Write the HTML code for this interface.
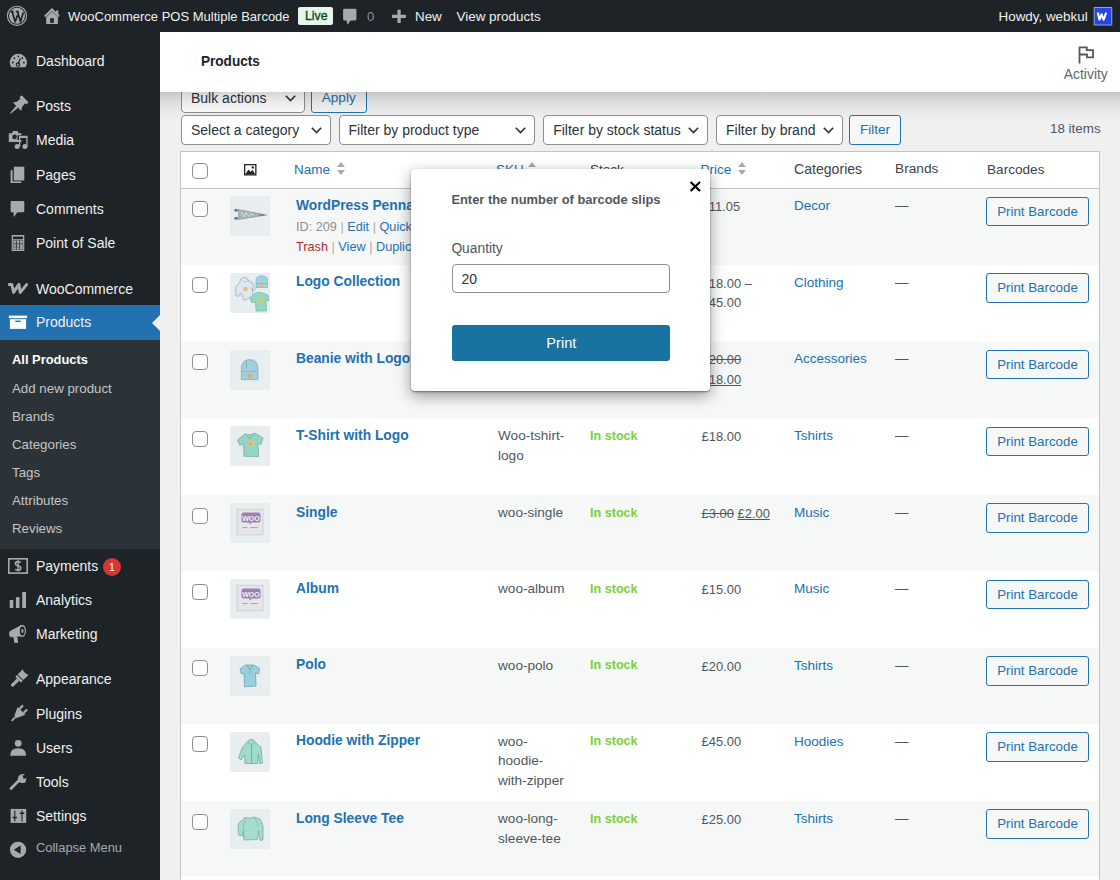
<!DOCTYPE html>
<html><head><meta charset="utf-8"><title>Products</title>
<style>
html,body{margin:0;padding:0;}
body{width:1120px;height:880px;overflow:hidden;background:#f0f0f1;font-family:"Liberation Sans",sans-serif;}
#wrap{position:relative;width:1120px;height:880px;overflow:hidden;}
.t{position:absolute;line-height:1;white-space:nowrap;}
.t a{color:inherit;text-decoration:none}
.t .sep{color:#a7aaad}
#content{position:absolute;left:0;top:0;width:1120px;height:880px;}
#header{position:absolute;left:0;top:0;width:0;height:0}
.hdrbg{position:absolute;left:160px;top:32px;width:960px;height:60px;background:#fff;}
.hdrsh{position:absolute;left:160px;top:92px;width:960px;height:28px;background:linear-gradient(rgba(0,0,0,.17),rgba(0,0,0,.13) 15%,rgba(0,0,0,.075) 40%,rgba(0,0,0,.03) 70%,rgba(0,0,0,0));}
#sidebar{position:absolute;left:0;top:0;width:0;height:0}
.sbbg{position:absolute;left:0;top:32px;width:160px;height:848px;background:#1d2327;}
#adminbar{position:absolute;left:0;top:0;width:1120px;height:32px;background:#1d2327;}
#header > .t, #sidebar > .t, #modalc > .t {margin-top:0}
.cb{position:absolute;width:14px;height:14px;border:1px solid #8c8f94;border-radius:4px;background:#fff;}
.thumb{position:absolute;width:40px;height:40px;background:#e8eef0;overflow:hidden;border-radius:2px}
.btn{position:absolute;box-sizing:border-box;border:1px solid #2271b1;border-radius:3px;background:#f6f7f7;color:#2271b1;font-size:13.5px;}
.pb{width:103px;height:29.5px;line-height:28px;text-align:center;font-size:13.3px}
.sel{position:absolute;box-sizing:border-box;height:30px;border:1px solid #8c8f94;border-radius:4px;background:#fff;color:#2c3338;font-size:14px;line-height:28px;padding-left:9px;white-space:nowrap}
.chev{position:absolute;right:8px;top:11px;width:11px;height:7px}
.sort{position:absolute;width:8px;height:14px}
.sort:before{content:"";position:absolute;left:0;top:0;border-left:4px solid transparent;border-right:4px solid transparent;border-bottom:5px solid #a7aaad}
.sort:after{content:"";position:absolute;left:0;top:8px;border-left:4px solid transparent;border-right:4px solid transparent;border-top:5px solid #a7aaad}
.sortup{position:absolute;width:8px;height:14px}
.sortup:before{content:"";position:absolute;left:0;top:0;border-left:4px solid transparent;border-right:4px solid transparent;border-bottom:5px solid #a7aaad}
#modal{position:absolute;left:410.5px;top:168.5px;width:299px;height:222.8px;background:#fff;border-radius:4px;box-shadow:0 1px 2px rgba(0,0,0,0.45),0 5px 15px rgba(0,0,0,0.38);}
#modalc{position:absolute;left:0;top:0;width:0;height:0}

</style></head>
<body>
<div id="wrap">
<div id="content">
<div style="position:absolute;left:180px;top:151px;width:918px;height:800px;background:#fff;border:1px solid #c3c4c7;"></div>
<div style="position:absolute;left:181px;top:188px;width:918px;height:1px;background:#c3c4c7"></div>
<div style="position:absolute;left:181px;top:189.00px;width:918px;height:75.80px;background:#f6f7f7"></div>
<div style="position:absolute;left:181px;top:264.80px;width:918px;height:76.70px;background:#fff"></div>
<div style="position:absolute;left:181px;top:341.50px;width:918px;height:76.70px;background:#f6f7f7"></div>
<div style="position:absolute;left:181px;top:418.20px;width:918px;height:76.80px;background:#fff"></div>
<div style="position:absolute;left:181px;top:495.00px;width:918px;height:76.20px;background:#f6f7f7"></div>
<div style="position:absolute;left:181px;top:571.20px;width:918px;height:76.60px;background:#fff"></div>
<div style="position:absolute;left:181px;top:647.80px;width:918px;height:75.95px;background:#f6f7f7"></div>
<div style="position:absolute;left:181px;top:723.75px;width:918px;height:77.35px;background:#fff"></div>
<div style="position:absolute;left:181px;top:801.10px;width:918px;height:75.30px;background:#f6f7f7"></div>
<div style="position:absolute;left:181px;top:876.40px;width:918px;height:76.60px;background:#fff"></div>
<div class="cb" style="left:192px;top:200.80px"></div>
<div class="thumb" style="left:230px;top:196.30px"><svg width="40" height="40" viewBox="0 0 40 40" style="position:absolute;left:0;top:0"><path d="M8.5 13.5 L36.5 19 L8.5 23.5 Z" fill="#a4b4b9" stroke="#7f9196" stroke-width="0.6"/><path d="M11 16 L14 21 L16 16.5 L19 20.5 L21 17.5 L24 19.5" fill="none" stroke="#d3dde0" stroke-width="1"/><rect x="4.5" y="13" width="3.2" height="2.6" fill="#6b7478"/><rect x="4.5" y="21" width="3.2" height="2.6" fill="#6b7478"/><path d="M29 19 L34 19" stroke="#5b676b" stroke-width="1.2"/></svg></div>
<div class="t" style="left:296.00px;top:198.97px;font-size:13.8px;color:#2271b1;font-weight:bold;">WordPress Pennant</div>
<div class="t" style="left:296.00px;top:220.71px;font-size:12.7px;color:#2271b1;font-weight:normal;"><span style="color:#8c8f94">ID: 209</span> <span class="sep">|</span> <a>Edit</a> <span class="sep">|</span> <a>Quick Edit</a></div>
<div class="t" style="left:296.00px;top:241.01px;font-size:12.7px;color:#2271b1;font-weight:normal;"><span style="color:#b32d2e">Trash</span> <span class="sep">|</span> <a>View</a> <span class="sep">|</span> <a>Duplicate</a></div>
<div class="t" style="left:701.50px;top:199.69px;font-size:12.95px;color:#50575e;font-weight:normal;line-height:19.5px;top:197.00px">£11.05</div>
<div class="t" style="left:794.00px;top:199.23px;font-size:13.5px;color:#2271b1;font-weight:normal;">Decor</div>
<div class="t" style="left:895.00px;top:199.23px;font-size:13.5px;color:#50575e;font-weight:normal;">—</div>
<div class="btn pb" style="left:986px;top:196.60px">Print Barcode</div>
<div class="cb" style="left:192px;top:277.30px"></div>
<div class="thumb" style="left:230px;top:272.80px"><svg width="40" height="40" viewBox="0 0 40 40" style="position:absolute;left:0;top:0"><path d="M13 5.5 Q16 3 19 5.5 L20 8.5 L23.5 11 L25 19 L22.5 19.5 L22 16 L21.5 25 L12 27 L10 19 L7 22 L4.5 20.5 L6.5 12 L11 8.5 Z" fill="#dfe7ee" stroke="#a3b3c1" stroke-width="0.8" transform="rotate(-12 15 16)"/><path d="M12.5 7.5 Q15.5 10.5 19 7.5" fill="none" stroke="#a3b3c1" stroke-width="0.6"/><circle cx="15.5" cy="16" r="2.3" fill="#e2bf73"/><path d="M26 14.5 L26 7.5 Q26 2.8 31.5 2.8 Q37.5 2.8 37.5 7.5 L37.5 14.5 Z" fill="#a3d2e1" stroke="#79a9bb" stroke-width="0.6"/><path d="M26 10.5 H37.5" stroke="#79a9bb" stroke-width="0.6"/><circle cx="31.8" cy="12.6" r="1.8" fill="#e2bf73"/><path d="M20 24.5 L26 19.5 L31 19.5 L38 22 L39 27.5 L36 27.5 L36.5 38 L26 38 L25.5 29.5 L21.5 29.5 Z" fill="#92d8bf" stroke="#6bb59c" stroke-width="0.6"/><circle cx="31" cy="28" r="2.4" fill="#e2bf73"/></svg></div>
<div class="t" style="left:296.00px;top:275.47px;font-size:13.8px;color:#2271b1;font-weight:bold;">Logo Collection</div>
<div class="t" style="left:701.50px;top:276.19px;font-size:12.95px;color:#50575e;font-weight:normal;line-height:19.5px;top:273.50px">£18.00 –<br>£45.00</div>
<div class="t" style="left:794.00px;top:275.72px;font-size:13.5px;color:#2271b1;font-weight:normal;">Clothing</div>
<div class="t" style="left:895.00px;top:275.72px;font-size:13.5px;color:#50575e;font-weight:normal;">—</div>
<div class="btn pb" style="left:986px;top:273.10px">Print Barcode</div>
<div class="cb" style="left:192px;top:354.00px"></div>
<div class="thumb" style="left:230px;top:349.50px"><svg width="40" height="40" viewBox="0 0 40 40" style="position:absolute;left:0;top:0"><path d="M11.3 29.7 L11.3 19 Q11.3 9.6 19.6 9.6 Q28 9.6 28 19 L28 29.7 Z" fill="#a2cfdd" stroke="#6fa3b6" stroke-width="0.6"/><path d="M11.3 21.4 H28" stroke="#7fb1c2" stroke-width="0.7"/><path d="M16.5 11.5 V18" stroke="#6b97a8" stroke-width="0.6"/><ellipse cx="19.5" cy="26" rx="2" ry="2.6" fill="#e3a962"/></svg></div>
<div class="t" style="left:296.00px;top:352.17px;font-size:13.8px;color:#2271b1;font-weight:bold;">Beanie with Logo</div>
<div class="t" style="left:701.50px;top:352.89px;font-size:12.95px;color:#50575e;font-weight:normal;line-height:19.5px;top:350.20px"><s>£20.00</s><br><u>£18.00</u></div>
<div class="t" style="left:794.00px;top:352.42px;font-size:13.5px;color:#2271b1;font-weight:normal;">Accessories</div>
<div class="t" style="left:895.00px;top:352.42px;font-size:13.5px;color:#50575e;font-weight:normal;">—</div>
<div class="btn pb" style="left:986px;top:349.80px">Print Barcode</div>
<div class="cb" style="left:192px;top:430.70px"></div>
<div class="thumb" style="left:230px;top:426.20px"><svg width="40" height="40" viewBox="0 0 40 40" style="position:absolute;left:0;top:0"><path d="M7.5 14 L15 8 Q20 10 25 7.2 L33 12 L31 18.5 L28 17 L28.5 30.7 L14 30.2 L13.5 17.5 L10 19.5 Z" fill="#96d5c5" stroke="#6aa899" stroke-width="0.7"/><path d="M16 8.5 L20 13 L24 8" fill="none" stroke="#6aa899" stroke-width="0.6"/><circle cx="20.5" cy="17.5" r="2.8" fill="#e4c36d"/><circle cx="20.5" cy="17.5" r="1.5" fill="#e6a35d"/></svg></div>
<div class="t" style="left:296.00px;top:428.87px;font-size:13.8px;color:#2271b1;font-weight:bold;">T-Shirt with Logo</div>
<div class="t" style="left:498.00px;top:429.04px;font-size:13.6px;color:#50575e;font-weight:normal;line-height:19.5px;top:426.30px">Woo-tshirt-<br>logo</div>
<div class="t" style="left:590.00px;top:429.89px;font-size:12.6px;color:#7ad03a;font-weight:bold;">In stock</div>
<div class="t" style="left:701.50px;top:429.59px;font-size:12.95px;color:#50575e;font-weight:normal;line-height:19.5px;top:426.90px">£18.00</div>
<div class="t" style="left:794.00px;top:429.12px;font-size:13.5px;color:#2271b1;font-weight:normal;">Tshirts</div>
<div class="t" style="left:895.00px;top:429.12px;font-size:13.5px;color:#50575e;font-weight:normal;">—</div>
<div class="btn pb" style="left:986px;top:426.50px">Print Barcode</div>
<div class="cb" style="left:192px;top:507.50px"></div>
<div class="thumb" style="left:230px;top:503.00px"><svg width="40" height="40" viewBox="0 0 40 40" style="position:absolute;left:0;top:0"><rect x="7" y="6.2" width="26" height="25.7" fill="#e6e6e8" stroke="#c4c4c6" stroke-width="0.6"/><rect x="11.5" y="9.5" width="19" height="10" rx="2.2" fill="#9c80b4"/><path d="M19 19.5 L22 19.5 L20 21.5 Z" fill="#9c80b4"/><text x="21" y="17.6" font-family="Liberation Sans" font-size="7" font-weight="bold" fill="#f4f0f7" text-anchor="middle">WOO</text><path d="M12.5 24.6 H17.5 M20.5 24.6 H28" stroke="#7a7a7c" stroke-width="0.6"/></svg></div>
<div class="t" style="left:296.00px;top:505.67px;font-size:13.8px;color:#2271b1;font-weight:bold;">Single</div>
<div class="t" style="left:498.00px;top:505.84px;font-size:13.6px;color:#50575e;font-weight:normal;line-height:19.5px;top:503.10px">woo-single</div>
<div class="t" style="left:590.00px;top:506.69px;font-size:12.6px;color:#7ad03a;font-weight:bold;">In stock</div>
<div class="t" style="left:701.50px;top:506.39px;font-size:12.95px;color:#50575e;font-weight:normal;line-height:19.5px;top:503.70px"><s>£3.00</s> <u>£2.00</u></div>
<div class="t" style="left:794.00px;top:505.92px;font-size:13.5px;color:#2271b1;font-weight:normal;">Music</div>
<div class="t" style="left:895.00px;top:505.92px;font-size:13.5px;color:#50575e;font-weight:normal;">—</div>
<div class="btn pb" style="left:986px;top:503.30px">Print Barcode</div>
<div class="cb" style="left:192px;top:583.70px"></div>
<div class="thumb" style="left:230px;top:579.20px"><svg width="40" height="40" viewBox="0 0 40 40" style="position:absolute;left:0;top:0"><rect x="7" y="6.2" width="26" height="25.7" fill="#e6e6e8" stroke="#c4c4c6" stroke-width="0.6"/><rect x="11.5" y="9.5" width="19" height="10" rx="2.2" fill="#9c80b4"/><path d="M19 19.5 L22 19.5 L20 21.5 Z" fill="#9c80b4"/><text x="21" y="17.6" font-family="Liberation Sans" font-size="7" font-weight="bold" fill="#f4f0f7" text-anchor="middle">WOO</text><path d="M12.5 24.6 H17.5 M20.5 24.6 H28" stroke="#7a7a7c" stroke-width="0.6"/></svg></div>
<div class="t" style="left:296.00px;top:581.87px;font-size:13.8px;color:#2271b1;font-weight:bold;">Album</div>
<div class="t" style="left:498.00px;top:582.04px;font-size:13.6px;color:#50575e;font-weight:normal;line-height:19.5px;top:579.30px">woo-album</div>
<div class="t" style="left:590.00px;top:582.89px;font-size:12.6px;color:#7ad03a;font-weight:bold;">In stock</div>
<div class="t" style="left:701.50px;top:582.59px;font-size:12.95px;color:#50575e;font-weight:normal;line-height:19.5px;top:579.90px">£15.00</div>
<div class="t" style="left:794.00px;top:582.12px;font-size:13.5px;color:#2271b1;font-weight:normal;">Music</div>
<div class="t" style="left:895.00px;top:582.12px;font-size:13.5px;color:#50575e;font-weight:normal;">—</div>
<div class="btn pb" style="left:986px;top:579.50px">Print Barcode</div>
<div class="cb" style="left:192px;top:660.30px"></div>
<div class="thumb" style="left:230px;top:655.80px"><svg width="40" height="40" viewBox="0 0 40 40" style="position:absolute;left:0;top:0"><path d="M10 13 L15.5 9 L24 9 L29.5 12.5 L28.5 18 L25.5 17 L26 30 L14.5 30.8 L14 17.5 L11 17.5 Z" fill="#9ad0dc" stroke="#5f9eab" stroke-width="0.7"/><path d="M17 9 L20 14 L23 9" fill="none" stroke="#5f9eab" stroke-width="0.7"/><path d="M20 14 V19" stroke="#5f9eab" stroke-width="0.5"/></svg></div>
<div class="t" style="left:296.00px;top:658.47px;font-size:13.8px;color:#2271b1;font-weight:bold;">Polo</div>
<div class="t" style="left:498.00px;top:658.64px;font-size:13.6px;color:#50575e;font-weight:normal;line-height:19.5px;top:655.90px">woo-polo</div>
<div class="t" style="left:590.00px;top:659.49px;font-size:12.6px;color:#7ad03a;font-weight:bold;">In stock</div>
<div class="t" style="left:701.50px;top:659.19px;font-size:12.95px;color:#50575e;font-weight:normal;line-height:19.5px;top:656.50px">£20.00</div>
<div class="t" style="left:794.00px;top:658.72px;font-size:13.5px;color:#2271b1;font-weight:normal;">Tshirts</div>
<div class="t" style="left:895.00px;top:658.72px;font-size:13.5px;color:#50575e;font-weight:normal;">—</div>
<div class="btn pb" style="left:986px;top:656.10px">Print Barcode</div>
<div class="cb" style="left:192px;top:736.25px"></div>
<div class="thumb" style="left:230px;top:731.75px"><svg width="40" height="40" viewBox="0 0 40 40" style="position:absolute;left:0;top:0"><path d="M17 10 Q21 5 25 9.5 L27 12 L31 15 L32.5 31 L29.5 31.5 L28.5 22 L27.5 31.5 L15 31.5 L14.5 23 L11 28 L8.5 26 L12 16 Z" fill="#a0dacb" stroke="#6aa597" stroke-width="0.7"/><path d="M21.5 13 V31.5" stroke="#5b9385" stroke-width="0.6"/><path d="M18 10.5 Q21 14 25 11" fill="none" stroke="#6aa597" stroke-width="0.6"/></svg></div>
<div class="t" style="left:296.00px;top:734.42px;font-size:13.8px;color:#2271b1;font-weight:bold;">Hoodie with Zipper</div>
<div class="t" style="left:498.00px;top:734.59px;font-size:13.6px;color:#50575e;font-weight:normal;line-height:19.5px;top:731.85px">woo-<br>hoodie-<br>with-zipper</div>
<div class="t" style="left:590.00px;top:735.44px;font-size:12.6px;color:#7ad03a;font-weight:bold;">In stock</div>
<div class="t" style="left:701.50px;top:735.14px;font-size:12.95px;color:#50575e;font-weight:normal;line-height:19.5px;top:732.45px">£45.00</div>
<div class="t" style="left:794.00px;top:734.67px;font-size:13.5px;color:#2271b1;font-weight:normal;">Hoodies</div>
<div class="t" style="left:895.00px;top:734.67px;font-size:13.5px;color:#50575e;font-weight:normal;">—</div>
<div class="btn pb" style="left:986px;top:732.05px">Print Barcode</div>
<div class="cb" style="left:192px;top:813.60px"></div>
<div class="thumb" style="left:230px;top:809.10px"><svg width="40" height="40" viewBox="0 0 40 40" style="position:absolute;left:0;top:0"><path d="M15 8.5 Q20 10 24.5 8 L30.5 10.5 L33 17 L33 31 L30 31.3 L28.5 22 L27.5 30.5 L14 31 L13 22 L12.5 27 L8.5 26 L8 15 Z" fill="#a4dccf" stroke="#6fa89a" stroke-width="0.7"/><path d="M15.5 9 L13.5 16 L14 30" fill="none" stroke="#7fb6a8" stroke-width="0.6"/><path d="M24.5 8.5 L28.5 17" fill="none" stroke="#7fb6a8" stroke-width="0.6"/></svg></div>
<div class="t" style="left:296.00px;top:811.77px;font-size:13.8px;color:#2271b1;font-weight:bold;">Long Sleeve Tee</div>
<div class="t" style="left:498.00px;top:811.94px;font-size:13.6px;color:#50575e;font-weight:normal;line-height:19.5px;top:809.20px">woo-long-<br>sleeve-tee</div>
<div class="t" style="left:590.00px;top:812.79px;font-size:12.6px;color:#7ad03a;font-weight:bold;">In stock</div>
<div class="t" style="left:701.50px;top:812.49px;font-size:12.95px;color:#50575e;font-weight:normal;line-height:19.5px;top:809.80px">£25.00</div>
<div class="t" style="left:794.00px;top:812.02px;font-size:13.5px;color:#2271b1;font-weight:normal;">Tshirts</div>
<div class="t" style="left:895.00px;top:812.02px;font-size:13.5px;color:#50575e;font-weight:normal;">—</div>
<div class="btn pb" style="left:986px;top:809.40px">Print Barcode</div>
<div class="cb" style="left:192px;top:888.90px"></div>
<div class="thumb" style="left:230px;top:884.40px"><svg width="40" height="40" viewBox="0 0 40 40" style="position:absolute;left:0;top:0"><path d="M11.3 29.7 L11.3 19 Q11.3 9.6 19.6 9.6 Q28 9.6 28 19 L28 29.7 Z" fill="#a2cfdd" stroke="#6fa3b6" stroke-width="0.6"/><path d="M11.3 21.4 H28" stroke="#7fb1c2" stroke-width="0.7"/><path d="M16.5 11.5 V18" stroke="#6b97a8" stroke-width="0.6"/><ellipse cx="19.5" cy="26" rx="2" ry="2.6" fill="#e3a962"/></svg></div>
<div class="t" style="left:296.00px;top:887.07px;font-size:13.8px;color:#2271b1;font-weight:bold;">Cap</div>
<div class="t" style="left:498.00px;top:887.24px;font-size:13.6px;color:#50575e;font-weight:normal;line-height:19.5px;top:884.50px">woo-cap</div>
<div class="t" style="left:590.00px;top:888.09px;font-size:12.6px;color:#7ad03a;font-weight:bold;">In stock</div>
<div class="t" style="left:701.50px;top:887.79px;font-size:12.95px;color:#50575e;font-weight:normal;line-height:19.5px;top:885.10px">£16.00</div>
<div class="t" style="left:794.00px;top:887.32px;font-size:13.5px;color:#2271b1;font-weight:normal;">Accessories</div>
<div class="t" style="left:895.00px;top:887.32px;font-size:13.5px;color:#50575e;font-weight:normal;">—</div>
<div class="btn pb" style="left:986px;top:884.70px">Print Barcode</div>
<div class="t" style="left:294.00px;top:162.62px;font-size:13.5px;color:#2271b1;font-weight:normal;">Name</div>
<div class="sort" style="left:337px;top:162px"></div>
<div class="t" style="left:496.00px;top:162.62px;font-size:13.5px;color:#2271b1;font-weight:normal;">SKU</div>
<div class="sortup" style="left:528px;top:162px"></div>
<div class="t" style="left:590.00px;top:162.62px;font-size:13.5px;color:#3c434a;font-weight:normal;">Stock</div>
<div class="t" style="left:700.50px;top:162.62px;font-size:13.5px;color:#2271b1;font-weight:normal;">Price</div>
<div class="sort" style="left:738px;top:162px"></div>
<div class="t" style="left:794.00px;top:162.12px;font-size:14.1px;color:#3c434a;font-weight:normal;">Categories</div>
<div class="t" style="left:895.00px;top:162.45px;font-size:13.7px;color:#3c434a;font-weight:normal;">Brands</div>
<div class="t" style="left:987.00px;top:162.54px;font-size:13.6px;color:#3c434a;font-weight:normal;">Barcodes</div>
<div class="cb" style="left:192px;top:163px"></div>
<svg style="position:absolute;left:0;top:0" width="300" height="200" viewBox="0 0 300 200">
<rect x="244" y="164" width="12.5" height="11.5" fill="#1d2327"/>
<rect x="245.3" y="165.3" width="9.9" height="8.9" fill="#fff"/>
<path d="M245.3 174.2 L248.5 169.5 L250.5 172 L252.5 170 L255.2 174.2 Z" fill="#1d2327"/>
<circle cx="252.8" cy="167.4" r="1.2" fill="#1d2327"/>
</svg>
<div class="sel" style="left:181px;top:83px;width:123.8px">Bulk actions<svg class="chev" viewBox="0 0 11 7"><path d="M0.8 0.8 L5.5 5.6 L10.2 0.8" fill="none" stroke="#2c3338" stroke-width="1.6"/></svg></div>
<div class="btn" style="left:311px;top:83px;width:55.5px;height:30px;line-height:28px;padding:0;text-align:center">Apply</div>
<div class="sel" style="left:181px;top:115px;width:149.8px">Select a category<svg class="chev" viewBox="0 0 11 7"><path d="M0.8 0.8 L5.5 5.6 L10.2 0.8" fill="none" stroke="#2c3338" stroke-width="1.6"/></svg></div>
<div class="sel" style="left:338.5px;top:115px;width:196.5px">Filter by product type<svg class="chev" viewBox="0 0 11 7"><path d="M0.8 0.8 L5.5 5.6 L10.2 0.8" fill="none" stroke="#2c3338" stroke-width="1.6"/></svg></div>
<div class="sel" style="left:543.2px;top:115px;width:165px">Filter by stock status<svg class="chev" viewBox="0 0 11 7"><path d="M0.8 0.8 L5.5 5.6 L10.2 0.8" fill="none" stroke="#2c3338" stroke-width="1.6"/></svg></div>
<div class="sel" style="left:716px;top:115px;width:126.5px">Filter by brand<svg class="chev" viewBox="0 0 11 7"><path d="M0.8 0.8 L5.5 5.6 L10.2 0.8" fill="none" stroke="#2c3338" stroke-width="1.6"/></svg></div>
<div class="btn" style="left:849px;top:115px;width:52px;height:30px;line-height:28px;padding:0;text-align:center">Filter</div>
<div class="t" style="left:1050.00px;top:121.61px;font-size:13.4px;color:#50575e;font-weight:normal;">18 items</div>
</div>
<div id="header">
<div class="hdrbg"></div><div class="hdrsh"></div>
<div class="t" style="left:200.50px;top:53.79px;font-size:14.6px;color:#1d2327;font-weight:bold;transform:scaleX(0.93);transform-origin:0 0;">Products</div>
<svg style="position:absolute;left:1070px;top:40px" width="30" height="30" viewBox="1070 40 30 30"><path d="M1079.5 63.4 V47.3 H1086.8 V50.2 H1093 V57.3 H1087 V54.5 H1080.3" fill="none" stroke="#50575e" stroke-width="1.8" stroke-linejoin="miter"/></svg>
<div class="t" style="left:1063.80px;top:68.28px;font-size:13.9px;color:#62676c;font-weight:normal;">Activity</div>
</div>
<div id="sidebar">
<div class="sbbg"></div>
<div style="position:absolute;left:0;top:305px;width:160px;height:34.6px;background:#2271b1"></div>
<div style="position:absolute;left:0;top:339.6px;width:160px;height:209.2px;background:#2c3338"></div>
<div style="position:absolute;left:152px;top:314.6px;width:0;height:0;border-top:8px solid transparent;border-bottom:8px solid transparent;border-right:8px solid #f0f0f1"></div>
<div class="t" style="left:36.00px;top:54.10px;font-size:14px;color:#f0f0f1;font-weight:normal;">Dashboard</div>
<div class="t" style="left:36.00px;top:99.40px;font-size:14px;color:#f0f0f1;font-weight:normal;">Posts</div>
<div class="t" style="left:36.00px;top:133.10px;font-size:14px;color:#f0f0f1;font-weight:normal;">Media</div>
<div class="t" style="left:36.00px;top:168.10px;font-size:14px;color:#f0f0f1;font-weight:normal;">Pages</div>
<div class="t" style="left:36.00px;top:202.10px;font-size:14px;color:#f0f0f1;font-weight:normal;">Comments</div>
<div class="t" style="left:36.00px;top:236.00px;font-size:14px;color:#f0f0f1;font-weight:normal;">Point of Sale</div>
<div class="t" style="left:36.00px;top:281.50px;font-size:14px;color:#f0f0f1;font-weight:normal;">WooCommerce</div>
<div class="t" style="left:36.00px;top:314.80px;font-size:14px;color:#f0f0f1;font-weight:normal;">Products</div>
<div class="t" style="left:36.00px;top:559.10px;font-size:14px;color:#f0f0f1;font-weight:normal;">Payments</div>
<div class="t" style="left:36.00px;top:593.10px;font-size:14px;color:#f0f0f1;font-weight:normal;">Analytics</div>
<div class="t" style="left:36.00px;top:627.40px;font-size:14px;color:#f0f0f1;font-weight:normal;">Marketing</div>
<div class="t" style="left:36.00px;top:672.10px;font-size:14px;color:#f0f0f1;font-weight:normal;">Appearance</div>
<div class="t" style="left:36.00px;top:707.10px;font-size:14px;color:#f0f0f1;font-weight:normal;">Plugins</div>
<div class="t" style="left:36.00px;top:741.40px;font-size:14px;color:#f0f0f1;font-weight:normal;">Users</div>
<div class="t" style="left:36.00px;top:775.40px;font-size:14px;color:#f0f0f1;font-weight:normal;">Tools</div>
<div class="t" style="left:36.00px;top:809.40px;font-size:14px;color:#f0f0f1;font-weight:normal;">Settings</div>
<div class="t" style="left:12.00px;top:354.04px;font-size:12.9px;color:#fff;font-weight:bold;">All Products</div>
<div class="t" style="left:12.00px;top:381.94px;font-size:13.3px;color:#c3c4c7;font-weight:normal;">Add new product</div>
<div class="t" style="left:12.00px;top:409.94px;font-size:13.3px;color:#c3c4c7;font-weight:normal;">Brands</div>
<div class="t" style="left:12.00px;top:438.19px;font-size:13.3px;color:#c3c4c7;font-weight:normal;">Categories</div>
<div class="t" style="left:12.00px;top:466.19px;font-size:13.3px;color:#c3c4c7;font-weight:normal;">Tags</div>
<div class="t" style="left:12.00px;top:493.69px;font-size:13.3px;color:#c3c4c7;font-weight:normal;">Attributes</div>
<div class="t" style="left:12.00px;top:522.45px;font-size:13.3px;color:#c3c4c7;font-weight:normal;">Reviews</div>
<svg style="position:absolute;left:0;top:0" width="160" height="880" viewBox="0 0 160 880">
<path d="M11.2 67.3 A8.65 8.65 0 1 1 25.5 67.3 Z" fill="#a7aaad"/>
<circle cx="12.8" cy="62.5" r="0.9" fill="#1d2327"/><circle cx="14.4" cy="58.2" r="0.9" fill="#1d2327"/><circle cx="18.35" cy="56.3" r="0.9" fill="#1d2327"/><circle cx="22.3" cy="58.2" r="0.9" fill="#1d2327"/><circle cx="23.9" cy="62.5" r="0.9" fill="#1d2327"/>
<path d="M18.1 64.2 L20.3 58.4" stroke="#1d2327" stroke-width="1.2"/>
<circle cx="18" cy="64.6" r="1.7" fill="none" stroke="#1d2327" stroke-width="1.1"/>
<g transform="translate(17.6 106.2) rotate(45) scale(1.12)" fill="#a7aaad">
<rect x="-4.4" y="-9.4" width="8.8" height="2.8" rx="0.6"/>
<path d="M-2.8 -7 L2.8 -7 L3.4 -1.8 L5.4 0.6 L-5.4 0.6 L-3.4 -1.8 Z"/>
<path d="M-1.2 0.6 L1.2 0.6 L0.4 9.2 L-0.4 9.2 Z"/>
</g>
<path d="M8.8 133.2 H12 L13 130.9 H17.6 L18.6 133.2 H21.4 V142 H8.8 Z" fill="#a7aaad"/>
<circle cx="14.6" cy="136.9" r="2.3" fill="#1d2327"/>
<rect x="17.6" y="135.2" width="10.2" height="4.8" fill="#1d2327"/>
<path d="M19 135.7 H27.6 V146.5 H26.3 V138 H20.3 V146.5 H19 Z" fill="#a7aaad"/>
<circle cx="17.2" cy="146.4" r="2.5" fill="#a7aaad"/><circle cx="24.9" cy="146.4" r="2.5" fill="#a7aaad"/>
<rect x="10.6" y="170.2" width="10.8" height="12.8" fill="#a7aaad"/>
<rect x="12.6" y="165.8" width="12.6" height="15.6" fill="#1d2327"/>
<rect x="13.8" y="166.7" width="10.5" height="13.8" fill="#a7aaad"/>
<rect x="10.6" y="201" width="13.7" height="11.3" rx="1.3" fill="#a7aaad"/>
<path d="M13.4 212 L17.6 212 L13.8 217 Z" fill="#a7aaad"/>
<rect x="11.7" y="235" width="12.6" height="16" fill="#a7aaad"/>
<rect x="13" y="236.6" width="10" height="2.6" fill="#1d2327"/>
<g fill="#1d2327"><rect x="12.9" y="240.6" width="10.2" height="9.2"/></g>
<g fill="#a7aaad">
<rect x="13.3" y="241" width="2.6" height="2.6"/><rect x="16.7" y="241" width="2.6" height="2.6"/><rect x="20.1" y="241" width="2.6" height="2.6"/>
<rect x="13.3" y="244.2" width="2.6" height="2.6"/><rect x="16.7" y="244.2" width="2.6" height="2.6"/><rect x="20.1" y="244.2" width="2.6" height="5.4"/>
<rect x="13.3" y="247.2" width="2.6" height="2.4"/><rect x="16.7" y="247.2" width="2.6" height="2.4"/>
</g>
<path d="M9.2 284.6 L11.8 284.6 L13.6 292.4 L18.9 284.4 L20.3 292.4 L26.6 284.6" fill="none" stroke="#a7aaad" stroke-width="3" stroke-linejoin="round" stroke-linecap="round"/>
<rect x="8.8" y="315.6" width="18.4" height="2.6" fill="#fff"/>
<rect x="9.9" y="319.2" width="16.2" height="9.7" fill="#fff"/>
<rect x="15.3" y="320.6" width="5.4" height="1.4" fill="#2271b1"/>
<rect x="8.8" y="558.8" width="18.4" height="14.3" fill="none" stroke="#a7aaad" stroke-width="1.6"/>
<path d="M20.6 562.6 Q20 561.6 18 561.6 Q15.4 561.6 15.4 563.6 Q15.4 565.4 18 565.8 Q20.7 566.3 20.7 568.2 Q20.7 570.2 18 570.2 Q15.8 570.2 15.2 569" fill="none" stroke="#a7aaad" stroke-width="1.6"/><path d="M18 560.2 V571.6" stroke="#a7aaad" stroke-width="1.4"/>
<rect x="9.7" y="600" width="3.6" height="8" fill="#a7aaad"/><rect x="15.9" y="597.2" width="3.6" height="10.8" fill="#a7aaad"/><rect x="22.2" y="592" width="3.8" height="16" fill="#a7aaad"/>
<path d="M9.2 633 Q9.4 631.2 11 630.6 L20.5 625.6 L22 636.3 L11.8 637.3 Q9.2 637.3 9.2 634.6 Z" fill="#a7aaad"/>
<path d="M13.4 636.8 L17.2 636.8 L18.2 642.8 L14.4 643 Z" fill="#a7aaad"/>
<ellipse cx="22.1" cy="630.9" rx="3.9" ry="6.1" fill="#a7aaad"/>
<ellipse cx="22.3" cy="630.9" rx="2.5" ry="4.5" fill="#1d2327"/>
<ellipse cx="22.4" cy="631" rx="1.1" ry="2" fill="#a7aaad"/>
<g transform="translate(18.2 679.5) rotate(45)" fill="#a7aaad">
<path d="M-4 -10.5 Q-1 -8.5 4 -10.5 L4 -3.2 L-4 -3.2 Z"/>
<rect x="-4" y="-2.4" width="8" height="2.6"/>
<path d="M-1.7 0.2 L1.7 0.2 L1.5 9 Q0 10.2 -1.5 9 Z"/>
</g>
<g transform="translate(18 714.5) rotate(45)" fill="#a7aaad">
<rect x="-4" y="-10" width="2.2" height="5"/><rect x="1.8" y="-10" width="2.2" height="5"/>
<path d="M-5.5 -5 L5.5 -5 L1.6 3.5 L-1.6 3.5 Z"/>
<rect x="-1" y="3" width="2" height="6"/>
</g>
<circle cx="18.2" cy="743.3" r="3.4" fill="#a7aaad"/>
<path d="M10.2 755.7 Q10.2 748.3 18.2 748.3 Q26.2 748.3 26.2 755.7 Z" fill="#a7aaad"/>
<path d="M11 788.5 L19.5 780" stroke="#a7aaad" stroke-width="2.8" stroke-linecap="round"/>
<path d="M18.6 777.8 A4.6 4.6 0 0 0 25.2 782.5 L26.6 778.3 L24.6 779.4 L22.5 778 L22.8 775.6 L25.2 774.5 A4.6 4.6 0 0 0 18.6 777.8 Z" fill="#a7aaad"/>
<circle cx="22" cy="778.8" r="4.2" fill="#a7aaad"/>
<path d="M22.6 775.5 L26.8 774.5 L25.8 778.4 L23.5 778.8 Z" fill="#1d2327"/>
<rect x="10.6" y="808.9" width="15.6" height="14" fill="#a7aaad"/>
<path d="M14.8 810.6 V821.6 M22 810.6 V821.6" stroke="#1d2327" stroke-width="1.1"/>
<rect x="12.6" y="816.8" width="4.4" height="1.5" fill="#1d2327"/><rect x="19.8" y="812.5" width="4.4" height="1.5" fill="#1d2327"/>
<circle cx="18.05" cy="849.8" r="8.1" fill="#a7aaad"/>
<path d="M13.8 849.8 L20.6 845.5 L20.6 854.1 Z" fill="#1d2327"/>
</svg>
<div style="position:absolute;left:103px;top:558px;width:18px;height:18px;border-radius:9px;background:#d63638"></div>
<div class="t" style="left:109.00px;top:562.08px;font-size:10.5px;color:#fff;font-weight:normal;">1</div>
<div class="t" style="left:36.00px;top:842.03px;font-size:12.9px;color:#a7aaad;font-weight:normal;">Collapse Menu</div>
</div>
<div id="adminbar">
<div class="t" style="left:68.00px;top:10.05px;font-size:13.0px;color:#f0f0f1;font-weight:normal;">WooCommerce POS Multiple Barcode</div>
<div style="position:absolute;left:298px;top:7px;width:35px;height:18px;background:#e6f4ea;border-radius:2px"></div>
<div class="t" style="left:305.00px;top:9.54px;font-size:12.3px;color:#034d1a;font-weight:normal;-webkit-text-stroke:0.35px #034d1a;">Live</div>
<div class="t" style="left:367.00px;top:10.05px;font-size:13px;color:#8c8f94;font-weight:normal;">0</div>
<div class="t" style="left:415.00px;top:9.71px;font-size:13.4px;color:#f0f0f1;font-weight:normal;">New</div>
<div class="t" style="left:456.50px;top:9.67px;font-size:13.45px;color:#f0f0f1;font-weight:normal;">View products</div>
<div class="t" style="left:998.50px;top:9.69px;font-size:13.42px;color:#f0f0f1;font-weight:normal;">Howdy, webkul</div>
<svg style="position:absolute;left:0;top:0" width="1120" height="32" viewBox="0 0 1120 32">
<circle cx="17" cy="15.8" r="9.6" fill="none" stroke="#a7aaad" stroke-width="1.1"/>
<circle cx="17" cy="15.8" r="8" fill="#a7aaad"/>
<path d="M10.6 11.6 L13.6 11.6 M12.1 11.6 L15.2 21.8 L17.4 15.2 M15.8 11.6 L18.9 11.6 M17.4 11.6 L20.5 21.8 L23.3 12.5" fill="none" stroke="#1d2327" stroke-width="1.7" stroke-linejoin="round"/>
<path d="M44.9 16.6 L52 9.4 L59 16.6" fill="none" stroke="#a7aaad" stroke-width="2.1"/>
<rect x="56" y="10.5" width="2.3" height="4.5" fill="#a7aaad"/>
<path d="M46.2 17.2 L52 11.6 L57.9 17.2 L57.9 24 L46.2 24 Z" fill="#a7aaad"/>
<rect x="50.2" y="18.2" width="3.6" height="4.7" fill="#1d2327"/>
<rect x="343.1" y="8.8" width="13.3" height="11.6" rx="1.3" fill="#a7aaad"/>
<path d="M346.5 20 L351 20 L347.4 24.7 Z" fill="#a7aaad"/>
<path d="M399.1 9.8 V23 M392 16.4 H405.9" stroke="#a7aaad" stroke-width="3.2"/>
<rect x="1094.25" y="7.5" width="17.5" height="17.5" fill="#2545e8" stroke="#9aa3c7" stroke-width="1"/>
<path d="M1097.8 12.6 L1099.4 19.6 L1101.6 14.4 L1103.6 19.6 L1106.2 12.6" fill="none" stroke="#fff" stroke-width="2.1" stroke-linejoin="round"/>
</svg>
</div>
<div id="modal"></div>
<div id="modalc">
<div style="position:absolute;left:452px;top:264.3px;width:217.7px;height:29.1px;box-sizing:border-box;border:1px solid #8c8f94;border-radius:4px;background:#fff"></div>
<div style="position:absolute;left:452px;top:325px;width:217.7px;height:35.6px;border-radius:3px;background:#1973a1"></div>
<svg style="position:absolute;left:0;top:0" width="720" height="200" viewBox="0 0 720 200"><path d="M690.6 182 L700 191 M700 182 L690.6 191" stroke="#000" stroke-width="2.2"/></svg>
<div class="t" style="left:451.40px;top:194.13px;font-size:12.9px;color:#50575e;font-weight:bold;">Enter the number of barcode slips</div>
<div class="t" style="left:451.40px;top:241.67px;font-size:13.8px;color:#50575e;font-weight:normal;">Quantity</div>
<div class="t" style="left:461.40px;top:271.80px;font-size:14px;color:#2c3338;font-weight:normal;">20</div>
<div class="t" style="left:546.30px;top:336.09px;font-size:14.6px;color:#fff;font-weight:normal;">Print</div>
</div>
</div>
</body></html>
